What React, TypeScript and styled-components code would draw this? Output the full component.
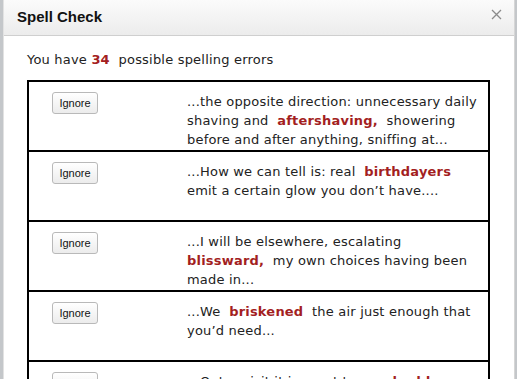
import React from "react";
import styled, { createGlobalStyle } from "styled-components";

const GlobalStyle = createGlobalStyle`
  html, body {
    margin: 0;
    padding: 0;
    background: #c4c7ca;
    overflow: hidden;
  }
`;

const Page = styled.div`
  width: 517px;
  height: 379px;
  display: flex;
  padding-left: 3px;
  box-sizing: border-box;
`;

const Dialog = styled.div`
  width: 510px;
  height: 379px;
  background: #fff;
  border-left: 1px solid #e2e2e2;
  border-right: 1px solid #d6d6d6;
  display: flex;
  flex-direction: column;
  overflow: hidden;
`;

const Header = styled.div`
  height: 36px;
  flex: none;
  display: flex;
  align-items: center;
  justify-content: space-between;
  padding: 0 12px 0 13px;
  background: linear-gradient(#fbfbfb, #ececec);
  border-bottom: 1px solid #cfcfcf;
  box-sizing: border-box;
`;

const Title = styled.div`
  font-family: "Liberation Sans", Arial, sans-serif;
  font-weight: bold;
  font-size: 15px;
  color: #111;
  margin-top: -2px;
`;

const Close = styled.svg`
  width: 11px;
  height: 11px;
  margin-top: -6px;
`;

const Body = styled.div`
  padding: 16px 0 0 23px;
  font-family: "DejaVu Sans", Verdana, sans-serif;
  font-size: 13px;
  letter-spacing: 0.2px;
  color: #222;
`;

const Summary = styled.div`
  line-height: 16px;
  margin-bottom: 12px;
  white-space: pre;
`;

const Count = styled.b`
  color: #a32020;
`;

const Table = styled.div`
  width: 463px;
  border: 2px solid #000;
  border-bottom: none;
  box-sizing: border-box;
`;

const Row = styled.div`
  display: grid;
  grid-template-columns: 158px 1fr;
  height: 70px;
  border-bottom: 2px solid #000;
  box-sizing: border-box;
`;

const ButtonCell = styled.div`
  padding: 10px 0 0 23px;
`;

const IgnoreButton = styled.button`
  width: 46px;
  height: 22px;
  padding: 0;
  border: 1px solid #b9b9b9;
  border-radius: 3px;
  background: linear-gradient(#ffffff, #ececec);
  font-family: "Liberation Sans", Arial, sans-serif;
  font-size: 11px;
  letter-spacing: 0;
  color: #111;
`;

const TextCell = styled.div`
  padding-top: 10px;
  line-height: 19px;
`;

const Line = styled.div`
  white-space: pre;
`;

const Misspelled = styled.b`
  color: #a31f1f;
`;

type Chunk = string | { bad: string };

const rows: Chunk[][][] = [
  [
    ["...the opposite direction: unnecessary daily"],
    ["shaving and  ", { bad: "aftershaving," }, "  showering"],
    ["before and after anything, sniffing at..."],
  ],
  [
    ["...How we can tell is: real  ", { bad: "birthdayers" }],
    ["emit a certain glow you don\u2019t have...."],
  ],
  [
    ["...I will be elsewhere, escalating"],
    [{ bad: "blissward," }, "  my own choices having been"],
    ["made in..."],
  ],
  [
    ["...We  ", { bad: "briskened" }, "  the air just enough that"],
    ["you\u2019d need..."],
  ],
  [["...Outer visit it is great to see  ", { bad: "buddery" }]],
];

export default function App() {
  return (
    <>
      <GlobalStyle />
      <Page>
        <Dialog>
          <Header>
            <Title>Spell Check</Title>
            <Close viewBox="0 0 11 11">
              <path d="M1 1L10 10M10 1L1 10" stroke="#8a8a8a" strokeWidth="1.3" />
            </Close>
          </Header>
          <Body>
            <Summary>
              You have <Count>34</Count>  possible spelling errors
            </Summary>
            <Table>
              {rows.map((lines, i) => (
                <Row key={i}>
                  <ButtonCell>
                    <IgnoreButton>Ignore</IgnoreButton>
                  </ButtonCell>
                  <TextCell>
                    {lines.map((line, j) => (
                      <Line key={j}>
                        {line.map((c, k) =>
                          typeof c === "string" ? (
                            <React.Fragment key={k}>{c}</React.Fragment>
                          ) : (
                            <Misspelled key={k}>{c.bad}</Misspelled>
                          )
                        )}
                      </Line>
                    ))}
                  </TextCell>
                </Row>
              ))}
            </Table>
          </Body>
        </Dialog>
      </Page>
    </>
  );
}
